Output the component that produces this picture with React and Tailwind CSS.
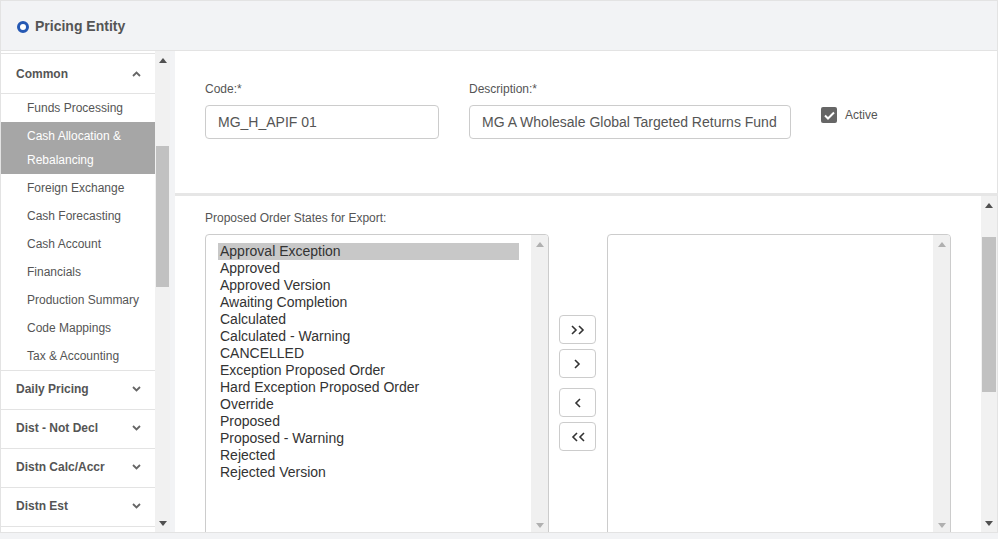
import React from 'react';

const subItems = [
  'Funds Processing',
  'Cash Allocation & Rebalancing',
  'Foreign Exchange',
  'Cash Forecasting',
  'Cash Account',
  'Financials',
  'Production Summary',
  'Code Mappings',
  'Tax & Accounting',
];

const sections = ['Daily Pricing', 'Dist - Not Decl', 'Distn Calc/Accr', 'Distn Est'];

const states = [
  'Approval Exception',
  'Approved',
  'Approved Version',
  'Awaiting Completion',
  'Calculated',
  'Calculated - Warning',
  'CANCELLED',
  'Exception Proposed Order',
  'Hard Exception Proposed Order',
  'Override',
  'Proposed',
  'Proposed - Warning',
  'Rejected',
  'Rejected Version',
];

const UpTri = ({ color = '#a0a0a0' }) => (
  <svg width="8" height="5" viewBox="0 0 8 5"><path d="M0 5 L4 0 L8 5 Z" fill={color} /></svg>
);
const DownTri = ({ color = '#a0a0a0' }) => (
  <svg width="8" height="5" viewBox="0 0 8 5"><path d="M0 0 L4 5 L8 0 Z" fill={color} /></svg>
);

const Chevron = ({ up }) => (
  <svg width="9" height="6" viewBox="0 0 9 6" className="mr-[14px]">
    <path
      d={up ? 'M1 5 L4.5 1.5 L8 5' : 'M1 1 L4.5 4.5 L8 1'}
      fill="none"
      stroke="#666"
      strokeWidth="1.8"
    />
  </svg>
);

const ListBox = ({ items }) => (
  <div className="w-[344px] h-[300px] border border-[#cccccc] rounded-t-[4px] flex bg-white overflow-hidden">
    <div className="flex-1 pt-[8px] pl-[12px] pr-[12px]">
      {items &&
        items.map((s, i) => (
          <div
            key={s}
            className={`text-[14px] leading-[17px] text-[#333] pl-[2px] ${i === 0 ? 'bg-[#c8c8c8]' : ''}`}
          >
            {s}
          </div>
        ))}
    </div>
    <div className="w-[17px] bg-[#f0f0f0] flex flex-col items-center justify-between pt-[7px] pb-[5px]">
      <UpTri color="#b0b0b0" />
      <DownTri color="#b0b0b0" />
    </div>
  </div>
);

const MoveBtn = ({ children, className = '' }) => (
  <button className={`w-[37px] h-[29px] border border-[#cccccc] rounded-[4px] bg-white flex items-center justify-center ${className}`}>
    {children}
  </button>
);

export default function App() {
  return (
    <div className="w-[998px] h-[539px] flex flex-col bg-[#f2f3f5] overflow-hidden" style={{ fontFamily: '"Liberation Sans", Arial, sans-serif' }}>
      {/* Header */}
      <div className="h-[51px] shrink-0 border-t border-l border-r border-b border-[#e3e3e3] bg-[#f2f3f5] flex items-center pl-[16px] pt-[2px]">
        <span className="w-[12px] h-[12px] rounded-full border-[3px] border-[#2558b3] bg-white" />
        <span className="ml-[6px] text-[14px] font-bold text-[#555]">Pricing Entity</span>
      </div>

      <div className="flex h-[481px] shrink-0">
        {/* Sidebar */}
        <div className="w-[155px] bg-white pt-[2px] flex flex-col overflow-hidden border-l border-[#e3e3e3]">
          <div className="h-[41px] shrink-0 border-t border-b border-[#e3e3e3] flex items-center justify-between pl-[15px]">
            <span className="text-[12px] font-bold text-[#555]">Common</span>
            <Chevron up />
          </div>
          {subItems.map((s, i) =>
            i === 1 ? (
              <div key={s} className="bg-[#a6a6a6] text-white text-[12px] leading-[24px] pl-[26px] py-[2px] shrink-0">
                Cash Allocation &amp;
                <br />
                Rebalancing
              </div>
            ) : (
              <div key={s} className="h-[28px] shrink-0 flex items-center pl-[26px] text-[12px] text-[#555]">
                {s}
              </div>
            )
          )}
          {sections.map((s) => (
            <div key={s} className="h-[39px] shrink-0 border-t border-[#e3e3e3] flex items-center justify-between pl-[15px] pb-[3px]">
              <span className="text-[12px] font-bold text-[#555]">{s}</span>
              <Chevron />
            </div>
          ))}
          <div className="border-t border-[#e3e3e3]" />
        </div>

        {/* Sidebar scrollbar */}
        <div className="w-[15px] bg-[#f1f1f1] relative flex flex-col items-center justify-between pt-[7px] pb-[6px]">
          <UpTri color="#505050" />
          <div className="absolute left-[1px] top-[95px] w-[13px] h-[141px] bg-[#c1c1c1]" />
          <DownTri color="#505050" />
        </div>
        <div className="w-[5px] bg-[#f2f3f5]" />

        {/* Main */}
        <div className="flex-1 flex flex-col bg-white">
          <div className="h-[142px] shrink-0 flex pl-[30px] pt-[31px] border-r border-[#e3e3e3]">
            <div className="flex flex-col w-[234px]">
              <label className="text-[12px] text-[#555] leading-[14px]">Code:*</label>
              <div className="mt-[9px] h-[34px] border border-[#cccccc] rounded-[4px] flex items-center pl-[12px] text-[14px] text-[#555]">
                MG_H_APIF 01
              </div>
            </div>
            <div className="flex flex-col w-[322px] ml-[30px]">
              <label className="text-[12px] text-[#555] leading-[14px]">Description:*</label>
              <div className="mt-[9px] h-[34px] border border-[#cccccc] rounded-[4px] flex items-center pl-[12px] text-[14px] text-[#555] whitespace-nowrap overflow-hidden">
                MG A Wholesale Global Targeted Returns Fund
              </div>
            </div>
            <div className="ml-[30px] mt-[25px] flex items-start">
              <span className="w-[16px] h-[16px] rounded-[2px] bg-[#666] flex items-center justify-center">
                <svg width="11" height="9" viewBox="0 0 11 9">
                  <path d="M1 4.5 L4 7.5 L10 1.5" fill="none" stroke="white" strokeWidth="2" />
                </svg>
              </span>
              <span className="ml-[8px] text-[12px] text-[#555] leading-[16px]">Active</span>
            </div>
          </div>
          <div className="h-[3px] shrink-0 bg-[#e6e6e6]" />
          <div className="flex-1 flex min-h-0">
            <div className="flex-1 pl-[30px] pt-[15px] overflow-hidden">
              <div className="text-[12px] text-[#555] leading-[14px]">Proposed Order States for Export:</div>
              <div className="mt-[9px] flex">
                <ListBox items={states} />
                <div className="ml-[10px] mr-[11px] pt-[81px] flex flex-col">
                  <MoveBtn>
                    <svg width="14" height="10" viewBox="0 0 14 10"><path d="M1 1 L5 5 L1 9 M8 1 L12 5 L8 9" fill="none" stroke="#333" strokeWidth="1.6" /></svg>
                  </MoveBtn>
                  <MoveBtn className="mt-[5px]">
                    <svg width="7" height="10" viewBox="0 0 7 10"><path d="M1 1 L5 5 L1 9" fill="none" stroke="#333" strokeWidth="1.6" /></svg>
                  </MoveBtn>
                  <MoveBtn className="mt-[10px]">
                    <svg width="7" height="10" viewBox="0 0 7 10"><path d="M6 1 L2 5 L6 9" fill="none" stroke="#333" strokeWidth="1.6" /></svg>
                  </MoveBtn>
                  <MoveBtn className="mt-[5px]">
                    <svg width="14" height="10" viewBox="0 0 14 10"><path d="M6 1 L2 5 L6 9 M13 1 L9 5 L13 9" fill="none" stroke="#333" strokeWidth="1.6" /></svg>
                  </MoveBtn>
                </div>
                <ListBox />
              </div>
            </div>
            <div className="w-[17px] bg-[#f1f1f1] relative flex flex-col items-center justify-between pt-[7px] pb-[6px] border-r border-[#e3e3e3]">
              <UpTri color="#505050" />
              <div className="absolute left-[1px] top-[41px] w-[14px] h-[155px] bg-[#c1c1c1]" />
              <DownTri color="#505050" />
            </div>
          </div>
        </div>
      </div>
      <div className="flex-1 bg-[#f2f3f5] border-t border-[#e3e3e3]" />
    </div>
  );
}
